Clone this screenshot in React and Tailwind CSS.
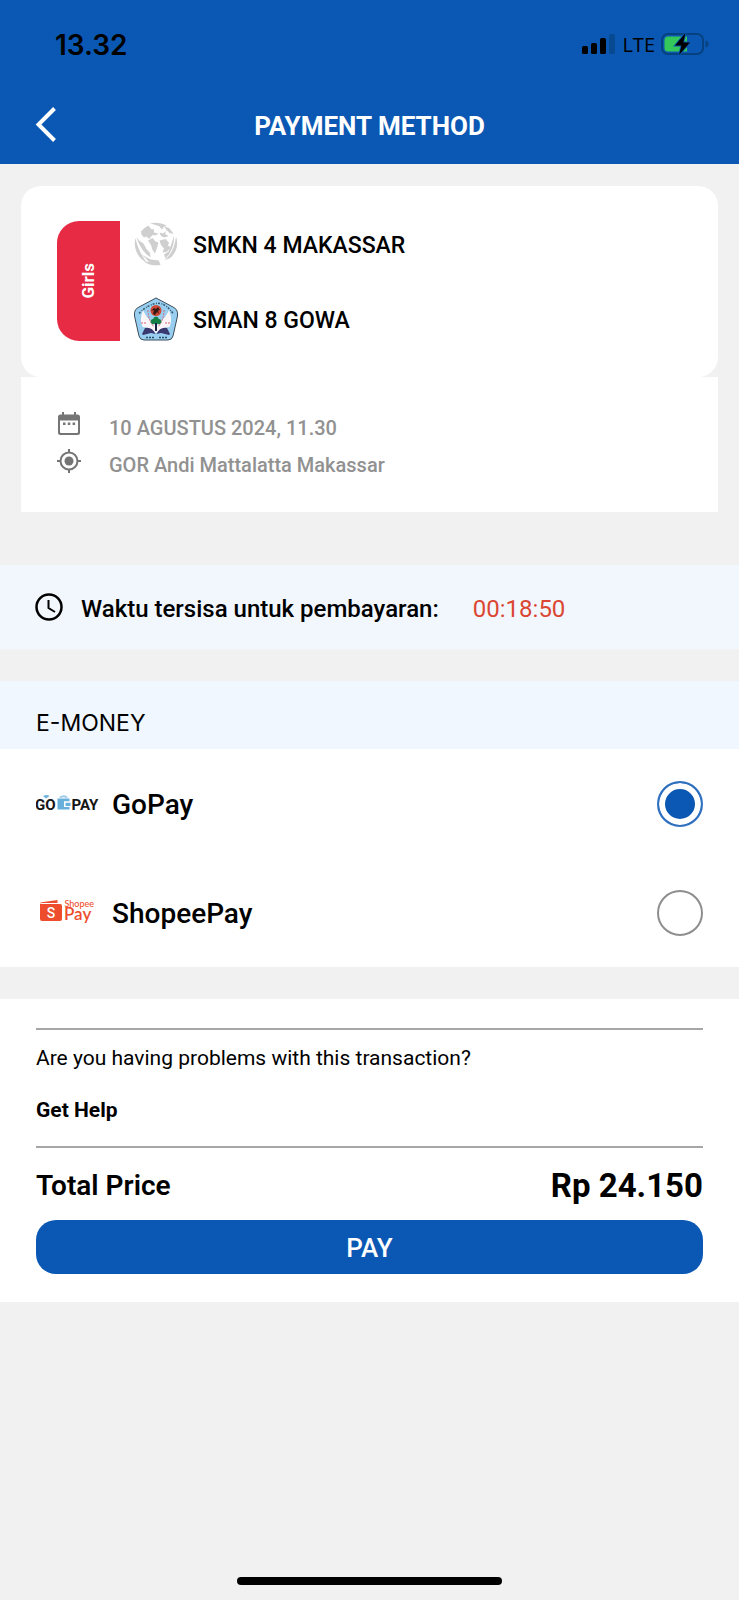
import { useState } from "react";

function SignalIcon() {
  return (
    <svg width="34" height="22" viewBox="0 0 34 22" aria-hidden="true">
      <rect x="0" y="13" width="6" height="8" rx="1.5" fill="#000" />
      <rect x="9" y="10" width="6" height="11" rx="1.5" fill="#000" />
      <rect x="18" y="5" width="6" height="16" rx="1.5" fill="#000" />
      <rect x="27" y="1" width="6" height="20" rx="1.5" fill="#084a92" />
    </svg>
  );
}

function BatteryIcon() {
  return (
    <svg width="48" height="24" viewBox="0 0 48 24" aria-hidden="true">
      <rect x="1" y="2" width="41" height="20" rx="6" fill="none" stroke="#07427f" strokeWidth="2" />
      <path d="M44.5 8.5c2 .6 3 1.900 3 3.500s-1 2.900-3 3.500z" fill="#07427f" />
      <path d="M7 4.500h19v15H7a3.500 3.500 0 0 1-3.500-3.500V8A3.500 3.500 0 0 1 7 4.500z" fill="#34c759" />
      <path d="M24.500 1L14 13.500h6.500L18 23l11-12.500h-6.700z" fill="#000" stroke="#0a58b3" strokeWidth="1.800" paintOrder="stroke" />
    </svg>
  );
}

function GlobeLogo() {
  return (
    <svg width="44" height="44" viewBox="0 0 44 44" aria-hidden="true" fill="#cfcfcf">
      <path d="M16 1.200C22 0 28 .8 33 4l-3 .5-2 3-3-3.500-3.500-1z" />
      <path d="M7 9.500Q10 5.500 14.500 3.500L17 7l3 .5v3l4.500 1-3 2-3-.5-3.500 4-2.500-2.500-2.500 1-2.500-3z" />
      <path d="M25.500 10.500l3.500 1 3-2.500-1 3 3.500 2-4 1.500-3.500-1.500z" />
      <path d="M30 4.500l5 1.500q3 3 4.500 6l-4-1-3-3z" />
      <path d="M1.500 16C-.5 24 2 32 8 37.500l5 3.500C7.500 33 3.500 26 1.500 16z" />
      <path d="M2.500 15C5 24 10 31 16.500 35.500L16 31l-3.500-4-3-5.500-4.500-3z" />
      <path d="M14 18.500l4.500-2.500 3 3.500 3 1-1.500 5.500-2 5.500-2.500-3.500-1.500-5z" />
      <path d="M25.500 18.500l6-1.500 3.500 3.500-1 3 3 2-4.500 4.500-4 .5 1.500-4-3-3.500z" />
      <path d="M42 14.500c3 9 0 17-6.500 22l-5 1.500C37 33 41 25 42 14.500z" />
      <path d="M40 14c.500 9-3 17-8.500 22.500l-1.500-4 4.500-3L37 23z" />
      <path d="M10 34.500l8 4 7 .5 1.500 4c-6 1-12 0-16.500-3.500l5 .5z" />
      <path d="M6.500 32l10 5.500 8.500 1-1 1.500-9-1.500z" />
    </svg>
  );
}

function SchoolEmblem() {
  return (
    <svg width="46" height="44" viewBox="0 0 46 44" aria-hidden="true">
      <path d="M23 1L7 9.500Q.5 12 1.500 19L6 39q1 4 5 4h24q4 0 5-4l4.500-20q1-7-5.500-9.500z" fill="#98cff0" stroke="#3b4c5a" strokeWidth="1" />
      <path d="M6 16.500Q14 8 23 6.500T40 16.500" fill="none" stroke="#37596f" strokeWidth="1.500" strokeDasharray="2 1.500 1 1" />
      <path d="M10 13q-4 10-.5 17 6.500 0 13.500 6 7-6 13.500-6 3.500-7-.5-17-3 7-8 11l-5 5-5-5q-5-4-8-11z" fill="#fbf5f7" />
      <path d="M15 13q0 10 6 17M31 13q0 10-6 17M8 26h6M32 26h6" fill="none" stroke="#d7647a" strokeWidth="1" strokeDasharray="2 1" />
      <circle cx="23" cy="13.500" r="5.500" fill="#cf4934" />
      <path d="M20 17l1-4-3 1 3-3 2 1 2-2 2 3-2 .5 1 3.500-2-2-2 3z" fill="#321817" />
      <path d="M23 19.500a3 3 0 0 1 2.800 2.500 2.600 2.600 0 1 1-1.800 4.500h-2a2.600 2.600 0 1 1-1.800-4.500A3 3 0 0 1 23 19.500z" fill="#148044" />
      <path d="M22 26h2v8h-2z" fill="#152343" />
      <path d="M12 31q7-1.500 10.500 6l-4.500-1-8 2-1-1zM34 31q-7-1.500-10.500 6l4.500-1 8 2 1-1z" fill="#39386f" />
      <path d="M13 40.500h9M26 40.500h8" stroke="#284b66" strokeWidth="1.500" strokeDasharray="2 1" />
    </svg>
  );
}

function CalendarIcon() {
  return (
    <svg width="24" height="24" viewBox="0 0 24 24" aria-hidden="true">
      <path fillRule="evenodd" fill="#757575" d="M5 0h2v2.500h10V0h2v2.500h1.500Q23 2.500 23 5v15.500Q23 23 20.500 23h-17Q1 23 1 20.500V5Q1 2.500 3.500 2.500H5zM3 8.500v11.500q0 1 1 1h16q1 0 1-1V8.500z" />
      <path fill="#757575" d="M6 10.500h2.500V13H6zM10.800 10.500h2.500V13h-2.500zM15.600 10.500h2.500V13h-2.500z" />
    </svg>
  );
}

function TargetIcon() {
  return (
    <svg width="24" height="24" viewBox="0 0 24 24" aria-hidden="true" fill="none" stroke="#757575" strokeWidth="2">
      <circle cx="12" cy="12" r="8.500" />
      <circle cx="12" cy="12" r="4.500" fill="#757575" stroke="none" />
      <path d="M12 0v3.500M12 20.500V24M0 12h3.500M20.500 12H24" />
    </svg>
  );
}

function ClockIcon() {
  return (
    <svg width="28" height="28" viewBox="0 0 28 28" aria-hidden="true" fill="none" stroke="#000">
      <circle cx="14" cy="14" r="12.500" strokeWidth="2.500" />
      <path d="M13.500 7v8l6.500 4" strokeWidth="2" />
    </svg>
  );
}

function GoPayLogo() {
  return (
    <svg width="64" height="20" viewBox="0 0 64 20" role="img" aria-label="GoPay">
      <text x="-1" y="15.500" fontFamily="Roboto, sans-serif" fontWeight="700" fontSize="15" fill="#151515">GO</text>
      <path d="M7 2q4-2 6.500 0L10 4.500z" fill="#6bb1dc" />
      <path d="M23 3q5-3.500 9 0l-1.500 1q-3-1.500-6 0z" fill="#9acbe8" />
      <path d="M21.500 4.500h12v3H28v5.500h5.500v2.500h-12z" fill="#69afdc" />
      <path d="M29.500 8.500h5v3.500h-5z" fill="#69afdc" />
      <path d="M28 7.500h6v1h-5v3.500h5v1h-6z" fill="#fff" />
      <text x="35.500" y="15.500" fontFamily="Roboto, sans-serif" fontWeight="700" fontSize="15" fill="#151515">PAY</text>
    </svg>
  );
}

function ShopeePayLogo() {
  return (
    <svg width="64" height="28" viewBox="0 0 64 28" role="img" aria-label="ShopeePay">
      <path d="M4 4.500Q4 3.500 5.500 3.200L21.500 1v3H6z" fill="#ee4d2d" />
      <path d="M4 5h20q2 0 2 2v13q0 2-2 2H6q-2 0-2-2z" fill="#ee4d2d" />
      <text x="15" y="18.500" textAnchor="middle" fontFamily="Roboto, sans-serif" fontSize="14" fill="#fff">S</text>
      <text x="28.500" y="7.500" fontFamily="Lato, sans-serif" fontSize="9" fill="#ee4d2d">Shopee</text>
      <text x="28" y="21" fontFamily="Lato, sans-serif" fontWeight="600" fontSize="17" fill="#ee4d2d">Pay</text>
    </svg>
  );
}

const methods = [
  { id: "gopay", name: "GoPay", Logo: GoPayLogo },
  { id: "shopeepay", name: "ShopeePay", Logo: ShopeePayLogo },
];

export default function App() {
  const [selected, setSelected] = useState("gopay");

  return (
    <div className="flex min-h-screen flex-col bg-[#f1f1f1] font-['Roboto',sans-serif] text-black">
      <header className="bg-[#0a58b3]">
        <div className="flex h-[88px] items-center justify-between pr-[30px] pl-[55px]">
          <span className="pt-[2px] font-['Inter',sans-serif] text-[28px] font-semibold">13.32</span>
          <div className="flex items-center gap-[6px]">
            <SignalIcon />
            <span className="pt-[2px] font-['Open_Sans',sans-serif] text-[20px] leading-6">LTE</span>
            <BatteryIcon />
          </div>
        </div>
        <div className="grid h-[76px] grid-cols-[40px_1fr_40px] items-center px-[34px] pb-[2px]">
          <button type="button" aria-label="Back">
            <svg width="24" height="36" viewBox="0 0 24 36" fill="none" stroke="#fff" strokeWidth="4" aria-hidden="true">
              <path d="M20.500 1.500L4.500 17.500l16 16" />
            </svg>
          </button>
          <h1 className="pt-[3px] text-center text-[26px] font-bold text-white">PAYMENT METHOD</h1>
        </div>
      </header>

      <main>
        <section className="mx-[21px] mt-[22px]">
          <div className="flex gap-[13px] rounded-[20px] bg-white px-9 pt-[35px] pb-9">
            <div className="flex h-[120px] w-[63px] items-center justify-center rounded-l-[22px] bg-[#e72b45]">
              <span className="rotate-180 text-[17px] font-bold text-white [writing-mode:vertical-rl]">Girls</span>
            </div>
            <div className="flex flex-col justify-between">
              <div className="flex h-[46px] items-center gap-[14px] text-[23px] font-medium">
                <span className="flex w-[46px] justify-center"><GlobeLogo /></span>
                <span className="pt-1">SMKN 4 MAKASSAR</span>
              </div>
              <div className="flex h-[44px] items-center gap-[14px] text-[23px] font-medium">
                <SchoolEmblem />
                <span className="pt-1">SMAN 8 GOWA</span>
              </div>
            </div>
          </div>
          <div className="flex flex-col gap-[5px] bg-white px-9 pt-[35px] pb-[31px] text-[20px] leading-8 font-medium text-[#919191]">
            <p className="flex gap-7">
              <CalendarIcon />
              10 AGUSTUS 2024, 11.30
            </p>
            <p className="flex gap-7">
              <TargetIcon />
              GOR Andi Mattalatta Makassar
            </p>
          </div>
        </section>

        <section className="mt-[53px] flex h-[84px] items-center bg-[#f2f7fe] px-[35px] text-[24px] font-medium">
          <ClockIcon />
          <p className="ml-[18px] pt-[3px]">Waktu tersisa untuk pembayaran:</p>
          <time className="ml-[34px] pt-[3px] font-normal text-[#db4632]">00:18:50</time>
        </section>

        <section className="mt-8 bg-white">
          <h2 id="emoney" className="flex h-[68px] items-end bg-[#f0f7ff] px-9 pb-2 font-['Inter',sans-serif] text-[23px] leading-9">E-MONEY</h2>
          <div role="radiogroup" aria-labelledby="emoney">
            {methods.map(({ id, name, Logo }) => (
              <label key={id} className="flex h-[109px] items-center px-9 text-[28px] font-medium">
                <Logo />
                <span className="ml-3 flex-1 pt-[3px]">{name}</span>
                <input
                  type="radio"
                  name="method"
                  value={id}
                  checked={selected === id}
                  onChange={() => setSelected(id)}
                  className="size-[46px] appearance-none rounded-full border-2 border-[#8e8e8e] bg-white checked:border-[#2f70c1] checked:bg-[#0a58b3] checked:shadow-[inset_0_0_0_6px_#fff]"
                />
              </label>
            ))}
          </div>
        </section>

        <section className="mt-8 bg-white px-9 pt-[29px] pb-7">
          <div className="flex flex-col items-start border-y-2 border-[#a6a6a6] pt-3 pb-5 text-[21px] leading-8">
            <p>Are you having problems with this transaction?</p>
            <a href="#help" className="mt-5 font-bold">Get Help</a>
          </div>
          <div className="flex h-[72px] items-center justify-between pt-[3px]">
            <span className="text-[28px] font-semibold">Total Price</span>
            <span className="text-[33px] font-bold">Rp 24.150</span>
          </div>
          <button type="button" className="h-[54px] w-full rounded-[20px] bg-[#0a58b3] pt-[2px] text-[26px] font-medium text-white">PAY</button>
        </section>
      </main>

      <footer className="mt-auto flex justify-center pt-8 pb-[15px]">
        <div className="h-2 w-[265px] rounded-full bg-black" />
      </footer>
    </div>
  );
}
